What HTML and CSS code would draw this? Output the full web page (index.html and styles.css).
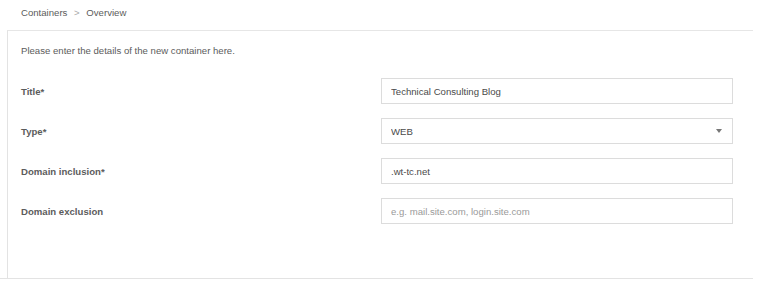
FILE: index.html
```html
<!DOCTYPE html>
<html lang="en">
<head>
  <meta charset="UTF-8" />
  <meta name="viewport" content="width=device-width, initial-scale=1.0" />
  <title>Containers - Overview</title>
  <link rel="stylesheet" href="styles.css">
</head>
<body>
  <div class="breadcrumb">
    <span>Containers</span>
    <span class="sep">&gt;</span>
    <span>Overview</span>
  </div>

  <div class="content">
    <div class="panel">
      <p class="intro">Please enter the details of the new container here.</p>

      <form class="form">
        <label for="title">Title*</label>
        <input type="text" id="title" value="Technical Consulting Blog">

        <label for="type">Type*</label>
        <div class="select-wrap">
          <select id="type">
            <option value="web">WEB</option>
            <option value="app">APP</option>
          </select>
          <svg class="arrow" width="6" height="4" viewBox="0 0 6 4"><path d="M0 0H6L3 4Z" fill="#777"/></svg>
        </div>

        <label for="inclusion">Domain inclusion*</label>
        <input type="text" id="inclusion" value=".wt-tc.net">

        <label for="exclusion">Domain exclusion</label>
        <input type="text" id="exclusion" placeholder="e.g. mail.site.com, login.site.com">
      </form>
    </div>
  </div>
</body>
</html>
```

FILE: styles.css
```css
body {
  margin: 0;
  font-family: "Liberation Sans", Arial, sans-serif;
  font-size: 9.6px;
  color: #5c5c5c;
  background: #fff;
}
.breadcrumb {
  height: 30px;
  line-height: 26px;
  padding-left: 21px;
  color: #5c5c5c;
}
.breadcrumb .sep {
  color: #aaa;
  margin: 0 4px;
}
.content {
  width: 753px;
  border-bottom: 1px solid #e3e3e3;
}
.panel {
  margin-left: 7px;
  border-top: 1px solid #e6e6e6;
  border-left: 1px solid #e3e3e3;
  padding: 14px 20px 54px 13px;
}
.intro {
  margin: 0 0 21px;
  line-height: 12px;
}
.form {
  display: grid;
  grid-template-columns: 360px 1fr;
  grid-auto-rows: 26px;
  row-gap: 14px;
  align-items: center;
}
.form label {
  font-weight: bold;
  color: #5c5c5c;
}
input, select {
  box-sizing: border-box;
  width: 100%;
  height: 26px;
  margin: 0;
  padding: 0 9px;
  border: 1px solid #dcdcdc;
  border-radius: 0;
  background: #fff;
  font-family: inherit;
  font-size: 9.6px;
  color: #4a4a4a;
  outline: none;
}
input::placeholder {
  color: #9a9a9a;
}
select {
  appearance: none;
  -webkit-appearance: none;
}
.select-wrap {
  position: relative;
  height: 26px;
}
.arrow {
  position: absolute;
  right: 11px;
  top: 11px;
  pointer-events: none;
}
```
